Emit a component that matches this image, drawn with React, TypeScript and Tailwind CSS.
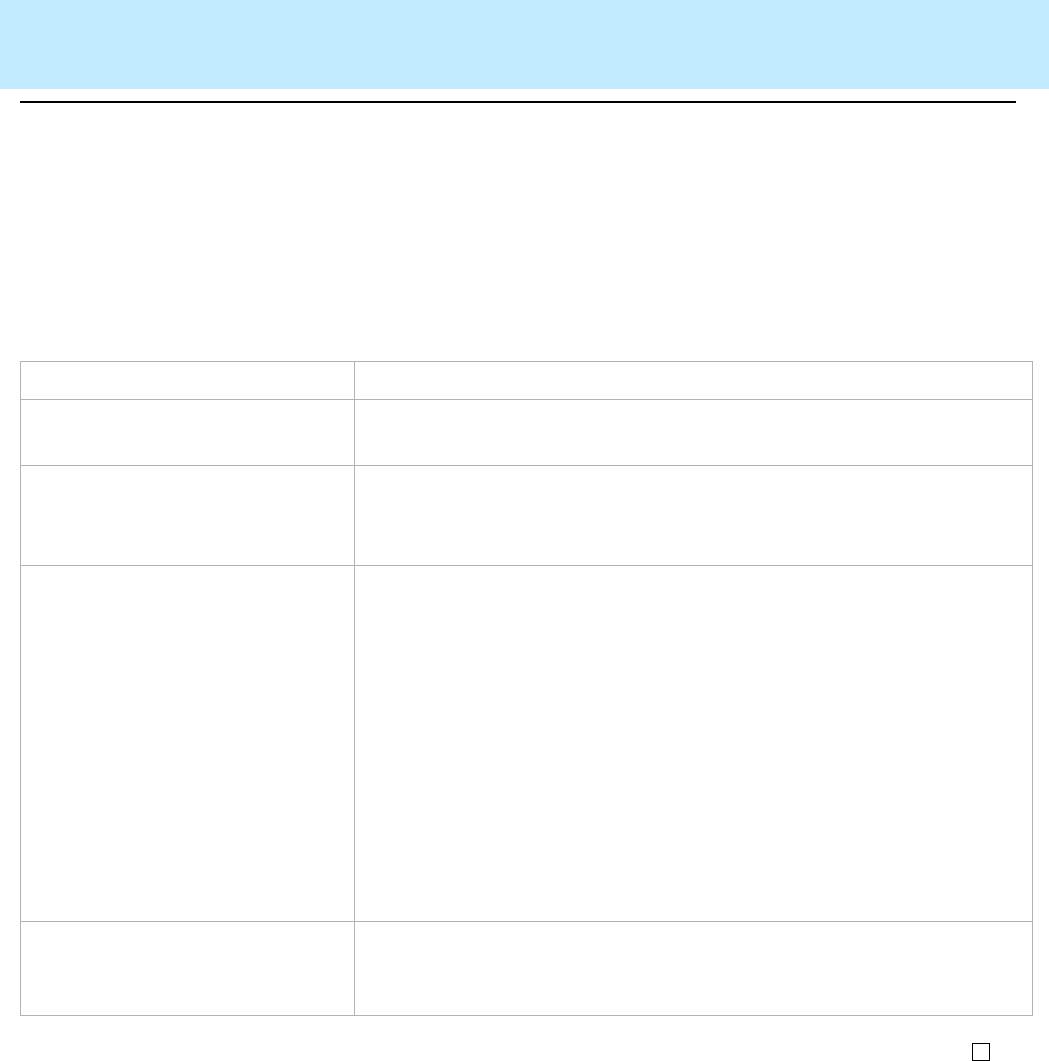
import React from 'react';

const rows = [38, 66, 100, 356, 94];

const App: React.FC = () => {
  return (
    <div className="h-[1061px] w-full overflow-hidden bg-white font-['Liberation_Sans',Arial,sans-serif]">
      <header className="h-[89px] bg-[#c2ebff]"></header>

      <div className="mt-[12px] ml-[20px] h-[2px] w-[996px] bg-black"></div>

      <div className="mt-[258px] ml-[20px] grid w-[1013px] grid-cols-[334px_678px] border-t border-l border-[#b3b3b3]">
        {rows.map((h, i) => (
          <React.Fragment key={i}>
            <div className="border-r border-b border-[#b3b3b3]" style={{ height: h }}></div>
            <div className="border-r border-b border-[#b3b3b3]" style={{ height: h }}></div>
          </React.Fragment>
        ))}
      </div>

      <div className="mt-[27px] ml-[972px] h-[18px] w-[18px] border border-black bg-white"></div>
    </div>
  );
};

export default App;
